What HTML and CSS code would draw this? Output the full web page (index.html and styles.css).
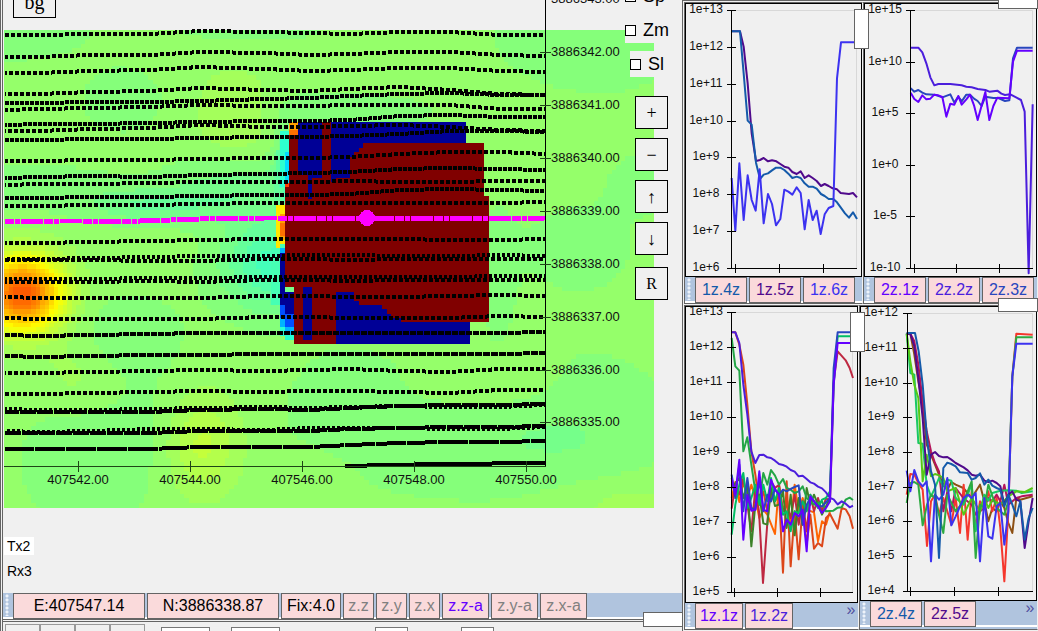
FILE: index.html
```
<!DOCTYPE html>
<html lang="en">
<head>
<meta charset="utf-8">
<title>Survey monitor</title>
<link rel="stylesheet" href="styles.css">
</head>
<body>
<main class="workspace">
  <section class="survey">
    <div class="map">
      <svg class="map-plot" viewBox="4 0 678 508" shape-rendering="crispEdges" role="img" aria-label="Survey map">
        <g id="heat"></g>
        <g id="anomaly">
          <path fill="#5effa0" d="M276 150h13v30h-13z"/>
          <path fill="#2effd0" d="M280 131h9v56h-9z"/>
          <path fill="#00dcff" d="M285 152h4v35h-4z"/>
          <path fill="#ffe600" d="M276 205h9v44h-9z"/>
          <path fill="#ffa000" d="M280 214h5v26h-5zM289 122h9v8h-9z"/>
          <path fill="#ff7000" d="M280 223h5v13h-5zM289 130h9v5h-9z"/>
          <path fill="#46ffb4" d="M271 248h9v57h-9zM280 244h5v4h-5z"/>
          <path fill="#00b4ff" d="M280 248h5v5h-5zM280 318h5v9h-5zM285 327h9v8h-9z"/>
          <path fill="#0050ff" d="M280 305h5v13h-5zM285 314h9v13h-9z"/>
          <path fill="#28ffd2" d="M280 327h5v9h-5zM285 335h9v5h-9z"/>
          <path fill="#800000" d="M289 135H298V122H466V143H484V196H489V322H470V344H294V287H285V187H289z"/>
          <path fill="#ff3c00" d="M285 183h4v4h-4z"/>
          <path fill="#000096" d="M298 122H322V178H312V199H308V175H298zM331 122H466V143H363V148H359V152H354V157H350V178H336V182H331zM280 253h5v52h-5zM285 292h9v22h-9zM303 287h9v53h-9zM336 292H354V301H359V305H382V309H387V314H391V318H401V322H470V344H336z"/>
          <path fill="#78ff8c" d="M285 287h9v5h-9z"/>
        </g>
        <g id="tracks" class="tracks"></g>
        <g id="current" class="current"></g>
        <circle class="cursor" cx="367" cy="218" r="8"/>
        <g id="map-axes" class="axes"></g>
      </svg>
      <button class="tool tool-bg">bg</button>
      <div class="map-tools">
        <label class="toggle toggle-wide"><input type="checkbox">Sp</label>
        <label class="toggle toggle-wide"><input type="checkbox">Zm</label>
        <label class="toggle"><input type="checkbox">Sl</label>
        <div class="zoom-tools">
          <button class="tool">+</button>
          <button class="tool">−</button>
          <button class="tool">↑</button>
          <button class="tool">↓</button>
          <button class="tool tool-reset">R</button>
        </div>
      </div>
    </div>
    <ul class="channels">
      <li class="channel selected">Tx2</li>
      <li class="channel">Rx3</li>
    </ul>
    <div class="toolbar">
      <span class="grip"></span>
      <button class="key key-coord">E:407547.14</button>
      <button class="key key-coord">N:3886338.87</button>
      <button class="key key-fix">Fix:4.0</button>
      <button class="key key-axis off">z.z</button>
      <button class="key key-axis off">z.y</button>
      <button class="key key-axis off">z.x</button>
      <button class="key key-cross violet">z.z-a</button>
      <button class="key key-cross off">z.y-a</button>
      <button class="key key-cross off">z.x-a</button>
    </div>
    <div class="dock">
      <div class="dock-tabs"><i></i><i></i><i></i><i></i></div>
      <div class="dock-fields"><i></i><i></i><i></i><i></i></div>
    </div>
    <span class="patch patch-survey"></span>
  </section>

  <section class="charts">
    <div class="chart-row">
      <article class="chart-panel">
        <svg class="chart" id="chart-1" viewBox="686 4 175 272" role="img" aria-label="Channels 1z.4z to 1z.6z"></svg>
        <div class="toolbar">
          <span class="grip"></span>
          <button class="key key-ch blue">1z.4z</button>
          <button class="key key-ch plum">1z.5z</button>
          <button class="key key-ch indigo">1z.6z</button>
        </div>
        <span class="patch patch-side"></span>
      </article>
      <article class="chart-panel">
        <svg class="chart" id="chart-2" viewBox="865 4 171 272" role="img" aria-label="Channels 2z.1z to 2z.3z"></svg>
        <div class="toolbar">
          <span class="grip"></span>
          <button class="key key-ch violet">2z.1z</button>
          <button class="key key-ch iris">2z.2z</button>
          <button class="key key-ch royal">2z.3z</button>
        </div>
        <span class="patch patch-top"></span>
      </article>
    </div>
    <div class="chart-row chart-row-low">
      <article class="chart-panel">
        <svg class="chart" id="chart-3" viewBox="686 307 171 295" role="img" aria-label="Channels 1z.1z and 1z.2z"></svg>
        <div class="toolbar">
          <span class="grip"></span>
          <button class="key key-short violet">1z.1z</button>
          <button class="key key-short iris">1z.2z</button>
          <button class="more" aria-label="More channels">»</button>
        </div>
        <span class="patch patch-side"></span>
      </article>
      <article class="chart-panel">
        <svg class="chart" id="chart-4" viewBox="861 307 175 293" role="img" aria-label="Channels 2z.4z and 2z.5z"></svg>
        <div class="toolbar">
          <span class="grip"></span>
          <button class="key key-ch blue">2z.4z</button>
          <button class="key key-ch plum">2z.5z</button>
          <button class="more" aria-label="More channels">»</button>
        </div>
        <span class="patch patch-top"></span>
      </article>
    </div>
  </section>
</main>
<script src="app.js"></script>
</body>
</html>
```
FILE: styles.css
```
* {
  box-sizing: border-box;
}

body {
  margin: 0;
  background: #f0f0f0;
  color: #000;
  font-family: "Liberation Sans", Arial, sans-serif;
  overflow: hidden;
}

button {
  font-family: inherit;
  color: inherit;
  padding: 0;
  border-radius: 0;
}

.workspace {
  display: grid;
  grid-template-columns: 683fr 355fr;
  min-height: 100vh;
  border-bottom: 1px solid #111;
}

.survey {
  position: relative;
  display: flex;
  flex-direction: column;
  border-left: 3px double #646464;
  border-right: 1px solid #646464;
  min-width: 0;
}

.map {
  position: relative;
  padding-left: 1px;
}

.map-plot,
.chart {
  display: block;
  width: 100%;
}

.tracks {
  fill: none;
  stroke: #000;
  stroke-width: 4;
}

.current {
  fill: none;
  stroke: #ff00ff;
  stroke-width: 5;
}

.cursor {
  fill: #ff00ff;
}

.axes path {
  fill: none;
  stroke: #000;
}

.axes .tick {
  stroke: #1e4616;
}

.axes text {
  font-size: 13px;
  fill: #111;
}

.tool {
  display: block;
  width: 33px;
  height: 33px;
  border: 1px solid #000;
  background: #f0f0f0;
  font-family: "Liberation Serif", "Times New Roman", serif;
  font-size: 18px;
  line-height: 30px;
}

.tool-bg {
  position: absolute;
  left: 10px;
  top: -15px;
  width: 43px;
  font-size: 20px;
}

.map-tools {
  position: absolute;
  left: 622px;
  top: -17px;
  display: flex;
  flex-direction: column;
  align-items: flex-end;
  gap: 8px;
}

.toggle {
  display: flex;
  align-items: center;
  gap: 7px;
  width: 46px;
  height: 26px;
  background: #f0f0f0;
  font-size: 18px;
}

.toggle-wide {
  width: 51px;
}

.toggle input {
  appearance: none;
  flex: none;
  width: 11px;
  height: 11px;
  margin: 0;
  border: 1px solid #000;
  background: #fff;
}

.zoom-tools {
  display: flex;
  flex-direction: column;
  gap: 9px;
  padding: 11px 8px 0 0;
}

.tool-reset {
  margin-top: 3px;
  font-size: 16px;
}

.channels {
  flex: 1;
  display: flex;
  flex-direction: column;
  align-items: flex-start;
  gap: 7px;
  margin: 0;
  padding: 29px 0 0 1px;
  list-style: none;
}

.channel {
  padding: 0 4px 0 3px;
  font-size: 14px;
  line-height: 18px;
}

.selected {
  background: #fff;
}

.toolbar {
  display: flex;
  gap: 2px;
  height: 26px;
  background: linear-gradient(#b0c4de 24px, #fff 24px);
}

.grip {
  width: 8px;
  height: 22px;
  margin-top: 1px;
  background: radial-gradient(circle, #eef3fa 1px, transparent 2px) 0 0 / 8px 4px;
}

.key {
  padding: 0;
  height: 26px;
  border: 1px solid #646464;
  background: #fadadb;
  font-size: 16px;
  line-height: 24px;
  white-space: nowrap;
}

.key-coord {
  width: 132px;
}

.key-fix {
  width: 60px;
}

.key-axis {
  width: 31px;
}

.key-cross {
  width: 47px;
}

.key-ch {
  width: 52px;
}

.key-short {
  width: 48px;
}

.off { color: #808080; }
.violet { color: #6400ff; }
.iris { color: #4b1edc; }
.indigo { color: #3c32f0; }
.royal { color: #2846be; }
.blue { color: #145aaa; }
.plum { color: #500a8c; }

.more {
  margin-left: auto;
  width: 14px;
  height: 14px;
  border: 0;
  background: none;
  color: #5050a0;
  font-size: 16px;
  line-height: 12px;
}

.dock {
  display: flex;
  height: 13px;
  gap: 16px;
  padding: 2px 0 0 2px;
  border-top: 3px double #646464;
}

.dock-tabs {
  display: flex;
}

.dock-tabs i {
  width: 35px;
  height: 8px;
  border: 1px solid #999;
}

.dock-fields {
  display: flex;
  gap: 21px;
  padding-top: 3px;
}

.dock-fields i {
  width: 49px;
  height: 5px;
  border: 1px solid #777;
  border-bottom: 0;
  background: #fff;
}

.dock-fields i:nth-child(2) {
  margin-right: 74px;
}

.dock-fields i:nth-child(n + 3) {
  width: 33px;
  margin-right: 32px;
}

.charts {
  display: flex;
  flex-direction: column;
  min-width: 0;
  padding: 0 0 2px 1px;
  border-top: 1px solid #646464;
}

.chart-row {
  display: grid;
  grid-template-columns: 179fr 175fr;
  padding-top: 1px;
}

.chart-row-low {
  grid-template-columns: 175fr 179fr;
}

.chart-panel {
  position: relative;
  min-width: 0;
  border: 1px solid #646464;
  border-right-color: #f0f0f0;
  background: #b0c4de;
}

.chart {
  border: 1px solid #000;
  background: #f0f0f0;
}

.chart .frame {
  fill: none;
  stroke: #d8d8d8;
}

.chart .series {
  fill: none;
  stroke-width: 6;
  stroke-linejoin: round;
}

.chart .axes text {
  font-size: 12px;
  text-anchor: middle;
}

.patch {
  position: absolute;
  z-index: 1;
  border: 1px solid #646464;
  background: #fff;
}

.patch-side {
  width: 15px;
  height: 40px;
  top: 6px;
  right: -7px;
}

.patch-top {
  width: 40px;
  height: 14px;
  top: -8px;
  right: -1px;
}

.patch-survey {
  width: 40px;
  height: 15px;
  right: -1px;
  bottom: 5px;
}
```
FILE: app.js
```
const NS = 'http://www.w3.org/2000/svg';

function add(parent, tag, attrs, text) {
  const node = document.createElementNS(NS, tag);
  for (const key in attrs) node.setAttribute(key, attrs[key]);
  if (text) node.textContent = text;
  parent.appendChild(node);
  return node;
}

/* Heat map: gaussian bumps [x, y, rx, ry, level] on a coarse grid, jet colours in 64 steps. */
const bumps = [
  [20, 291, 27, 25, 17.5], [232, 112, 26, 30, 1.7], [198, 442, 26, 34, 3],
  [72, 373, 24, 24, 1], [272, 262, 36, 32, -5], [150, 203, 45, 12, -2.4],
  [235, 185, 45, 22, -2], [288, 165, 10, 28, -4], [120, 98, 28, 22, -1.2],
  [8, 30, 60, 22, -1], [250, 20, 60, 16, -1], [30, 185, 70, 18, -1],
  [125, 330, 40, 28, -1.1], [85, 460, 50, 50, -1.1], [160, 425, 25, 40, -0.6],
  [350, 400, 45, 40, -1], [345, 110, 60, 14, -1.2], [460, 440, 90, 40, -1.2],
  [590, 430, 60, 60, -1], [600, 45, 55, 34, -1.1], [575, 245, 40, 32, -1],
  [640, 180, 25, 22, -1], [495, 270, 14, 50, -0.9], [530, 20, 30, 30, -0.8],
  [620, 500, 55, 20, 1.3], [480, 382, 50, 16, 1.1], [320, 480, 25, 25, 0.7]
];

function level(x, y) {
  let v = 1.45;
  for (const [bx, by, rx, ry, a] of bumps) {
    v += a * Math.exp(-0.5 * (((x - bx) / rx) ** 2 + ((y - by) / ry) ** 2));
  }
  return Math.floor(v);
}

function jet(step) {
  const v = 0.505 + step / 64;
  const part = c => Math.round(255 * Math.max(0, Math.min(1, 1.5 - Math.abs(4 * v - c))));
  return `rgb(${part(3)},${part(2)},${part(1)})`;
}

const heat = document.getElementById('heat');
const cell = 4.5;
for (let y = 30; y < 508; y += cell) {
  const h = Math.min(cell, 508 - y);
  let start = 4;
  let current = level(start, y);
  for (let x = 4 + cell; x < 654 + cell; x += cell) {
    const end = Math.min(x, 654);
    const next = x >= 654 ? null : level(x, y);
    if (next !== current) {
      add(heat, 'rect', { x: start, y, width: end - start, height: h, fill: jet(current) });
      start = end;
      current = next;
    }
  }
}

/* Survey tracks: y at the x stations below, then the dash pattern. */
const stations = [5, 40, 90, 150, 200, 265, 310, 350, 400, 450, 500, 545];
const tracks = [
  [[35, 35, 34, 34, 31, 32, 33, 34, 32, 32, 35, 35], '4 2'],
  [[57, 57, 55, 55, 52, 53, 55, 54, 52, 52, 55, 56], '4 2'],
  [[73, 73, 71, 70, 67, 69, 71, 70, 68, 68, 71, 72], '4 2'],
  [[94, 94, 92, 91, 88, 90, 91, 89, 87, 90, 94, 95], '4 2'],
  [[103, 103, 102, 102, 101, 99, 98, 96, 94, 93, 95, 95], '4 1'],
  [[110, 109, 108, 107, 105, 106, 106, 105, 105, 105, 109, 109], '4 2'],
  [[125, 124, 124, 123, 122, 121, 121, 120, 116, 115, 117, 117], '4 1'],
  [[131, 131, 129, 128, 125, 127, 127, 126, 125, 127, 130, 131], '4 2'],
  [[140, 140, 139, 139, 138, 137, 137, 136, 134, 131, 131, 132], '4 1'],
  [[161, 161, 160, 160, 159, 158, 158, 157, 154, 152, 152, 154], '4 2'],
  [[178, 177, 176, 177, 175, 174, 173, 172, 169, 168, 169, 170], '4 1'],
  [[185, 184, 184, 183, 182, 182, 182, 181, 182, 182, 181, 181], '4 2'],
  [[198, 198, 197, 197, 196, 195, 195, 194, 190, 189, 190, 191], '4 1'],
  [[206, 206, 205, 205, 204, 203, 203, 203, 203, 203, 203, 202], '4 2'],
  [[243, 243, 242, 241, 240, 239, 239, 239, 239, 240, 240, 239], '4 2'],
  [[259, 259, 258, 257, 256, 256, 255, 255, 256, 256, 255, 256], '3 2'],
  [[260, 260, 260, 261, 261, 259, 259, 260, 259, 259, 259, 259], '4 2'],
  [[279, 279, 279, 278, 278, 277, 277, 277, 277, 277, 276, 276], '3 2'],
  [[282, 282, 282, 281, 282, 280, 280, 281, 280, 280, 280, 280], '4 2'],
  [[297, 298, 298, 298, 298, 296, 296, 297, 297, 296, 295, 296], '4 2'],
  [[318, 319, 319, 319, 319, 317, 317, 318, 318, 318, 316, 317], '4 2'],
  [[335, 336, 335, 334, 333, 333, 333, 333, 333, 333, 333, 332], '6 1'],
  [[356, 357, 356, 355, 355, 354, 354, 354, 354, 354, 354, 353], '7 1'],
  [[373, 373, 372, 371, 370, 371, 370, 369, 371, 372, 369, 369], '4 2'],
  [[394, 394, 393, 392, 391, 392, 391, 391, 392, 393, 390, 390], '4 2'],
  [[409, 410, 410, 409, 408, 407, 408, 407, 406, 407, 407, 405], '3 2'],
  [[412, 412, 412, 412, 410, 409, 410, 408, 406, 405, 405, 404], '16 1'],
  [[431, 432, 431, 429, 429, 430, 428, 428, 428, 429, 429, 427], '3 2'],
  [[433, 433, 433, 433, 431, 431, 431, 429, 428, 427, 427, 426], '16 1'],
  [[449, 449, 449, 449, 447, 447, 447, 445, 443, 442, 442, 441], '30 1']
];
const layer = document.getElementById('tracks');
tracks.forEach(([ys, dash], i) => {
  add(layer, 'polyline', {
    points: ys.map((y, k) => `${stations[k]},${y}`).join(' '),
    'stroke-dasharray': dash,
    'stroke-dashoffset': i % 4
  });
});
add(layer, 'polyline', { points: '345,466 390,465 440,464 545,463' });
add(document.getElementById('current'), 'polyline', {
  points: '5,222 60,221 140,221 200,219 265,218 400,218 470,219 545,218',
  'stroke-dasharray': '9 1 5 1 22 1'
});

const mapAxes = document.getElementById('map-axes');
add(mapAxes, 'path', { d: 'M545.5 0V467' });
add(mapAxes, 'path', { class: 'tick', d: 'M4 466.5H546' });
[-1, 52, 105, 158, 211, 264, 317, 370, 422].forEach((y, i) => {
  add(mapAxes, 'path', { class: 'tick', d: `M540 ${y + 0.5}h11` });
  add(mapAxes, 'text', { x: 551, y: y + 4 }, `${3886343 - i}.00`);
});
[78, 190, 302, 414, 526].forEach((x, i) => {
  add(mapAxes, 'path', { class: 'tick', d: `M${x + 0.5} 461v11` });
  add(mapAxes, 'text', { x, y: 484, 'text-anchor': 'middle' }, `${407542 + 2 * i}.00`);
});

/* Charts: series points are in thirds of a pixel from the panel origin. */
const charts = [
  {
    id: 'chart-1', origin: [680, 0], axis: 731, right: 857, label: 706,
    ys: [10, 47, 84, 121, 157, 194, 231, 268], xs: [735, 779, 823],
    labels: ['1e+13', '1e+12', '1e+11', '1e+10', '1e+9', '1e+8', '1e+7', '1e+6'],
    series: [
      ['#500a8c', '155,94 180,94 191,140 203,250 215,400 228,483 240,480 251,474 264,484 276,481 289,484 301,492 313,500 325,503 337,516 350,522 362,514 374,534 386,526 398,534 410,543 423,558 434,552 446,558 458,565 471,568 482,579 507,582 519,579 531,592'],
      ['#145aaa', '155,94 180,94 191,220 203,362 215,374 228,488 240,537 251,524 264,520 276,511 288,503 301,503 313,510 325,521 337,534 350,530 362,534 374,550 386,560 398,560 410,566 423,582 434,588 446,597 460,597 471,607 482,622 495,640 507,653 519,637 531,657'],
      ['#3c32f0', '155,534 166,693 178,490 191,660 203,526 215,600 227,632 239,508 251,670 264,582 276,612 288,676 301,657 313,569 325,575 337,584 350,562 362,579 374,688 386,600 398,660 410,632 422,702 434,643 446,624 460,618 471,235 483,127 526,127']
    ]
  },
  {
    id: 'chart-2', origin: [855, 0], axis: 910, right: 1033, label: 885,
    ys: [10, 62, 113, 165, 216, 268], xs: [914, 956, 999],
    labels: ['1e+15', '1e+10', '1e+5', '1e+0', '1e-5', '1e-10'],
    series: [
      ['#2846be', '167,265 178,275 190,270 202,278 214,283 238,284 262,292 286,283 298,308 310,290 320,304 334,284 345,284 357,296 368,303 380,318 391,290 415,294 430,294 450,303 463,301 474,175 486,143 533,143'],
      ['#4b1edc', '167,143 190,143 202,157 214,190 226,232 238,256 250,252 286,252 320,256 334,260 350,262 368,267 391,270 403,275 427,272 439,281 450,285 466,283 498,300 509,335 521,820 533,313'],
      ['#6400ff', '167,278 178,297 190,306 202,286 214,298 226,296 238,284 250,286 262,291 274,350 286,311 298,314 310,288 320,314 334,298 345,284 357,316 368,360 391,276 403,360 415,318 427,293 463,295 474,185 486,152 533,152']
    ]
  },
  {
    id: 'chart-3', origin: [680, 298], axis: 731, right: 853, label: 706,
    ys: [312, 347, 382, 417, 452, 487, 522, 557, 592], xs: [734, 777, 820],
    labels: ['1e+13', '1e+12', '1e+11', '1e+10', '1e+9', '1e+8', '1e+7', '1e+6', '1e+5'],
    series: [
      ['#ff6400', '155,600 166,552 178,612 190,550 202,600 214,560 226,600 238,660 250,635 262,650 285,708 297,560 309,640 320,600 332,680 344,560 356,640 368,600 380,635 402,643 414,730 426,670 438,680 450,640'],
      ['#be2841', '155,632 166,560 178,590 190,540 202,620 214,700 226,570 237,640 249,855 262,675 273,550 285,570 297,560 309,640 320,620 332,660 344,590 356,680 368,610 380,700 391,590 402,640 414,600 426,640 438,600 450,610 461,250 473,160 497,187 509,210 519,240'],
      ['#dc4619', '155,103 166,103 178,140 190,200 202,320 214,460 226,530 238,620 250,580 262,640 273,590 285,610 297,590 309,824 320,550 332,805 344,640 356,784 368,620 380,740 391,650 402,752 414,735 426,745 438,660 450,648 473,692 485,630 497,634 509,655 519,692'],
      ['#3c8228', '155,570 178,540 190,600 202,560 214,745 226,620 238,590 250,676 262,680 273,570 285,624 297,620 309,580 320,690 332,590 344,712 356,600 368,680 380,570 391,620 402,590 426,650 450,600'],
      ['#23a546', '155,120 166,205 178,218 190,460 202,418 214,500 226,580 238,610 250,525 262,560 273,516 285,533 297,560 309,543 320,570 332,575 344,585 356,580 368,565 380,600 402,620 426,610 438,640 460,638 473,629 485,628 497,605 509,599 519,606'],
      ['#00be64', '155,710 166,620 178,560 190,525 202,630 214,600 226,560 238,620 250,560 262,610 273,540 285,610 297,570 309,650 320,640 332,700 344,640 356,645 368,610 380,640 391,590 414,630 426,605 438,600 450,580 461,260 473,115 511,115'],
      ['#2846be', '155,530 166,600 178,500 190,640 202,540 214,630 226,635 238,545 250,640 262,590 273,610 285,573 297,590 309,575 320,580 332,573 344,567 356,562 368,680 380,620 391,600 402,610 414,625 426,625 450,600 461,210 473,103 511,103'],
      ['#4b1edc', '155,103 166,103 178,135 190,260 202,350 214,460 226,495 238,471 250,470 262,478 273,480 285,488 297,498 309,501 320,506 332,516 344,521 356,535 368,533 380,543 391,553 402,557 414,566 426,571 438,583 450,600 461,604 473,619 485,610 497,617 509,628 519,623'],
      ['#6400ff', '155,540 166,590 178,485 190,725 202,590 214,638 226,635 238,520 250,635 262,640 273,545 285,575 297,590 309,700 320,665 332,680 344,645 356,655 368,635 380,760 391,595 402,610 414,625 426,645 438,630 450,610 461,260 473,135 511,135']
    ]
  },
  {
    id: 'chart-4', origin: [855, 298], axis: 907, right: 1033, label: 881,
    ys: [313, 348, 383, 417, 452, 487, 521, 556, 591], xs: [910, 954, 998],
    labels: ['1e+12', '1e+11', '1e+10', '1e+9', '1e+8', '1e+7', '1e+6', '1e+5', '1e+4'],
    series: [
      ['#8c5014', '155,107 166,107 178,170 190,250 203,320 215,440 228,470 240,500 252,530 265,560 277,575 289,552 302,560 325,570 350,600 375,560 388,610 400,670 412,630 425,640 436,610 448,630 460,675 472,705 484,600 496,605 533,595'],
      ['#f5372d', '155,590 166,528 178,530 190,555 203,575 216,744 228,610 240,590 252,650 265,600 277,640 289,680 302,600 315,705 326,560 338,725 350,580 362,690 375,610 388,630 400,580 412,640 425,600 436,690 448,850 460,640 472,235 484,107 533,110'],
      ['#b4145a', '155,107 166,107 178,130 190,200 203,310 215,400 228,460 240,495 252,520 265,640 277,580 289,640 302,570 325,600 350,620 362,650 388,630 400,600 412,610 425,590 436,610 448,560 460,620 484,600 500,595 533,590'],
      ['#19c864', '155,107 166,225 178,230 190,435 203,437 215,560 228,595 240,570 252,540 265,565 277,545 289,548 302,600 326,620 350,560 362,700 375,640 388,590 400,608 412,585 436,578 460,577 484,578 500,585 533,580'],
      ['#55c814', '155,107 166,190 178,260 190,300 203,550 215,470 228,535 240,528 252,532 265,540 277,580 302,570 326,650 350,600 375,640 388,600 400,630 412,605 436,620 460,595 484,580 510,582 533,570'],
      ['#2daa41', '155,615 166,555 178,552 190,560 203,682 216,620 228,590 240,600 265,705 277,590 302,640 326,610 350,550 362,780 375,620 388,630 400,560 425,630 448,650 460,610 472,235 484,118 533,118'],
      ['#3c32f0', '155,518 166,580 178,516 190,550 203,565 215,550 228,790 240,590 252,605 265,590 277,540 289,682 302,655 326,600 338,590 350,600 362,585 375,790 388,600 400,715 412,722 425,625 436,615 448,740 460,640 472,235 484,137 533,137'],
      ['#500a8c', '155,107 166,107 178,145 190,240 203,360 215,530 228,470 240,462 252,474 265,478 277,477 289,485 302,495 326,508 338,517 350,530 362,533 375,530 388,548 400,552 412,548 425,555 436,565 448,620 460,590 472,580 484,605 496,610 509,750 521,670 533,600'],
      ['#145aaa', '155,105 180,105 191,160 203,260 215,410 228,520 240,560 252,780 265,510 277,494 289,498 302,505 315,523 338,525 350,545 362,540 375,526 388,560 400,545 412,563 425,570 436,575 448,625 460,590 472,620 484,655 496,610 509,725 521,660 533,630']
    ]
  }
];

for (const c of charts) {
  const svg = document.getElementById(c.id);
  const top = c.ys[0];
  const base = c.ys[c.ys.length - 1];
  add(svg, 'path', { class: 'frame', d: `M${c.axis} ${top + 0.5}H${c.right - 0.5}V${base}` });
  const lines = add(svg, 'g', { class: 'series', transform: `translate(${c.origin}) scale(${1 / 3})` });
  for (const [stroke, points] of c.series) add(lines, 'polyline', { stroke, points });
  const axes = add(svg, 'g', { class: 'axes' });
  let d = `M${c.axis + 0.5} ${top}V${base}M${c.axis} ${base + 0.5}H${c.right}`;
  for (const y of c.ys) d += `M${c.axis - 4} ${y + 0.5}h9`;
  for (const x of c.xs) d += `M${x + 0.5} ${base - 4}v9`;
  add(axes, 'path', { d });
  c.ys.forEach((y, i) => add(axes, 'text', { x: c.label, y: y + 3 }, c.labels[i]));
}
```
